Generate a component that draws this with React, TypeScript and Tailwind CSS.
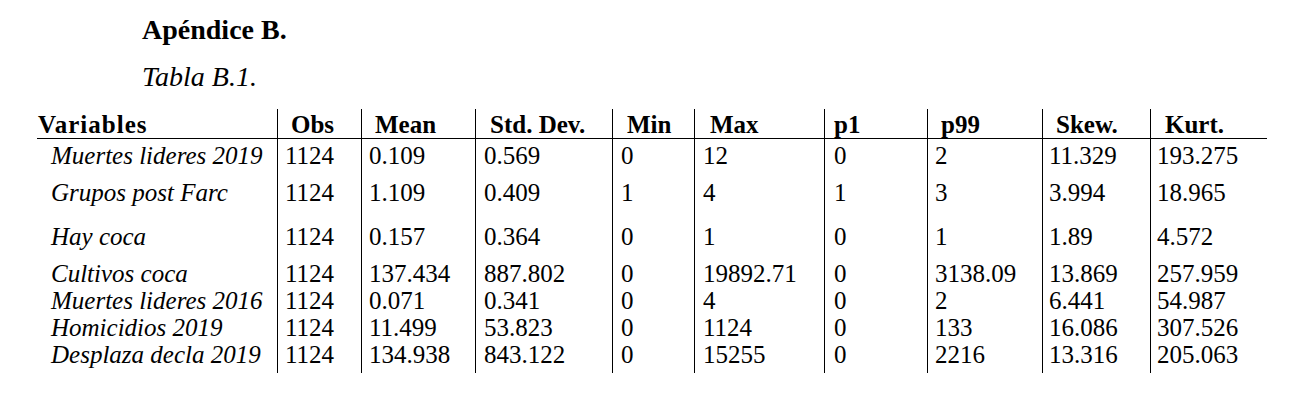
import React from "react";

const COLS =
  "grid grid-cols-[240px_84px_114px_137px_82px_130px_103px_115px_108px_117px]";

const headers = [
  "Variables",
  "Obs",
  "Mean",
  "Std. Dev.",
  "Min",
  "Max",
  "p1",
  "p99",
  "Skew.",
  "Kurt.",
];

const headerPad = [
  "pl-[1px] tracking-[1px]",
  "pl-[13px]",
  "pl-[13px]",
  "pl-[14px]",
  "pl-[14px]",
  "pl-[15px]",
  "pl-[9px]",
  "pl-[13px]",
  "pl-[13px]",
  "pl-[14px]",
];

const bodyPad = [
  "pl-[14px]",
  "pl-[7px]",
  "pl-[7px]",
  "pl-[8px]",
  "pl-[8px]",
  "pl-[8px]",
  "pl-[9px]",
  "pl-[7px]",
  "pl-[6px]",
  "pl-[6px]",
];

const rows: { h: string; cells: string[] }[] = [
  {
    h: "h-[40px] pt-[3px]",
    cells: ["Muertes lideres 2019", "1124", "0.109", "0.569", "0", "12", "0", "2", "11.329", "193.275"],
  },
  {
    h: "h-[44px]",
    cells: ["Grupos post Farc", "1124", "1.109", "0.409", "1", "4", "1", "3", "3.994", "18.965"],
  },
  {
    h: "h-[37px]",
    cells: ["Hay coca", "1124", "0.157", "0.364", "0", "1", "0", "1", "1.89", "4.572"],
  },
  {
    h: "h-[27px]",
    cells: ["Cultivos coca", "1124", "137.434", "887.802", "0", "19892.71", "0", "3138.09", "13.869", "257.959"],
  },
  {
    h: "h-[27px]",
    cells: ["Muertes lideres 2016", "1124", "0.071", "0.341", "0", "4", "0", "2", "6.441", "54.987"],
  },
  {
    h: "h-[27px]",
    cells: ["Homicidios 2019", "1124", "11.499", "53.823", "0", "1124", "0", "133", "16.086", "307.526"],
  },
  {
    h: "h-[32px]",
    cells: ["Desplaza decla 2019", "1124", "134.938", "843.122", "0", "15255", "0", "2216", "13.316", "205.063"],
  },
];

export default function App() {
  return (
    <div className="w-[1304px] h-[404px] bg-white text-black font-serif">
      <div className="font-['Liberation_Serif'] pl-[142px] pt-[14px]">
        <h1 className="text-[28px] leading-[32px] font-bold">Apéndice B.</h1>
        <p className="mt-[15px] text-[28px] leading-[32px] italic">Tabla B.1.</p>
      </div>
      <div className="font-['Liberation_Serif'] ml-[37px] mt-[16px] w-[1230px]">
        <div className={`${COLS} h-[30px] border-b border-black`}>
          {headers.map((h, i) => (
            <div
              key={h}
              className={`${i > 0 ? "border-l border-black" : ""} ${headerPad[i]} pt-[2px] text-[25px] leading-[27px] font-bold whitespace-nowrap`}
            >
              {h}
            </div>
          ))}
        </div>
        {rows.map((r, ri) => (
          <div key={ri} className={`${COLS}`}>
            {r.cells.map((c, i) => (
              <div
                key={i}
                className={`${r.h} ${i > 0 ? "border-l border-black" : "italic"} ${bodyPad[i]} text-[25px] leading-[28px] whitespace-nowrap`}
              >
                {c}
              </div>
            ))}
          </div>
        ))}
      </div>
    </div>
  );
}
